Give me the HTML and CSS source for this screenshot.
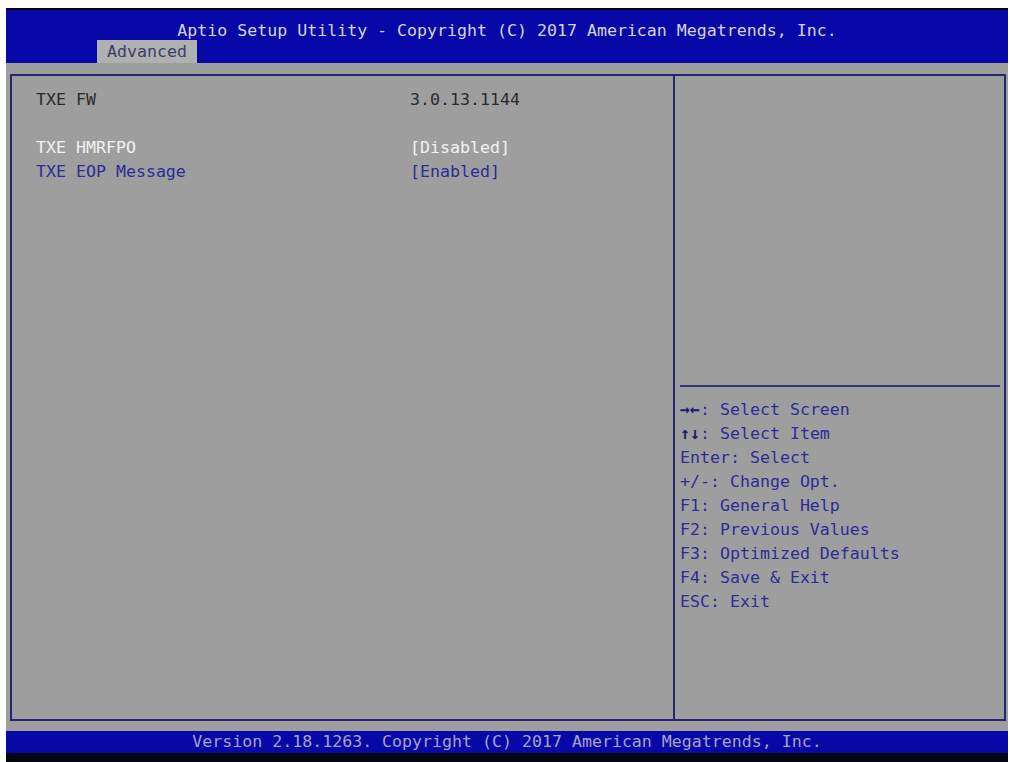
FILE: index.html
```html
<!DOCTYPE html>
<html>
<head>
  <title>Aptio Setup Utility</title>
  <link rel="stylesheet" href="styles.css">
</head>
<body>
  <div class="screen">
    <header class="title-bar">
      <div class="title">Aptio Setup Utility - Copyright (C) 2017 American Megatrends, Inc.</div>
      <div class="tabs">
        <span class="tab active">Advanced</span>
      </div>
    </header>

    <main class="setup-body">
      <div class="frame">
        <section class="main-panel">
          <div class="row info">
            <span class="label">TXE FW</span>
            <span class="value">3.0.13.1144</span>
          </div>
          <div class="row blank"></div>
          <div class="row option selected">
            <span class="label">TXE HMRFPO</span>
            <span class="value">[Disabled]</span>
          </div>
          <div class="row option">
            <span class="label">TXE EOP Message</span>
            <span class="value">[Enabled]</span>
          </div>
        </section>

        <aside class="help-panel">
          <div class="help-desc"></div>
          <ul class="help-keys">
            <li><span class="arrows">&rarr;&larr;</span>: Select Screen</li>
            <li><span class="arrows">&uarr;&darr;</span>: Select Item</li>
            <li>Enter: Select</li>
            <li>+/-: Change Opt.</li>
            <li>F1: General Help</li>
            <li>F2: Previous Values</li>
            <li>F3: Optimized Defaults</li>
            <li>F4: Save &amp; Exit</li>
            <li>ESC: Exit</li>
          </ul>
        </aside>
      </div>
    </main>

    <footer class="status-bar">Version 2.18.1263. Copyright (C) 2017 American Megatrends, Inc.</footer>
    <div class="bottom-edge"></div>
  </div>
</body>
</html>
```

FILE: styles.css
```css
html,
body {
  margin: 0;
  padding: 0;
  height: 762px;
  overflow: hidden;
  background-color: #ffffff;
}

body {
  font-family: "DejaVu Sans Mono", "Liberation Mono", monospace;
  font-size: 16.6px;
}

.screen {
  margin: 8px 2px 0 6px;
  border-top: 2px solid #050510;
  background-color: #050510;
}

/* top blue bar */
.title-bar {
  height: 53px;
  background-color: #0808a8;
  box-sizing: border-box;
  padding-top: 11px;
}

.title {
  height: 19px;
  line-height: 19px;
  text-align: center;
  color: #d4d4dc;
}

.tabs {
  display: flex;
  height: 23px;
  padding-left: 91px;
}

.tab {
  display: block;
  width: 100px;
  line-height: 23px;
  text-align: center;
  color: #3c3c6a;
}

.tab.active {
  background-color: #b0b0b0;
}

/* grey body */
.setup-body {
  height: 668px;
  box-sizing: border-box;
  padding: 11px 2px 10px 4px;
  background-color: #9e9e9e;
}

.frame {
  display: flex;
  height: 100%;
  box-sizing: border-box;
  border: 2px solid #262670;
}

.main-panel {
  width: 661px;
  box-sizing: border-box;
  padding: 12px 0 0 24px;
}

.row {
  display: flex;
  height: 24px;
  line-height: 24px;
}

.row .label {
  width: 374px;
}

.info {
  color: #2a2a2e;
}

.option {
  color: #2c2c98;
}

.option.selected {
  color: #f2f2f2;
}

.help-panel {
  flex: 1;
  border-left: 2px solid #262670;
  display: flex;
  flex-direction: column;
}

.help-desc {
  height: 309px;
  margin: 0 4px 0 5px;
  border-bottom: 2px solid #36367a;
}

.help-keys {
  list-style: none;
  margin: 0;
  padding: 11px 0 0 5px;
  color: #2c2c98;
}

.help-keys li {
  height: 24px;
  line-height: 24px;
}

.arrows {
  color: #1c1c70;
  font-weight: bold;
}

/* bottom blue bar */
.status-bar {
  height: 22px;
  line-height: 22px;
  text-align: center;
  background-color: #0808a8;
  color: #a4a4c4;
}

.bottom-edge {
  height: 9px;
}
```
